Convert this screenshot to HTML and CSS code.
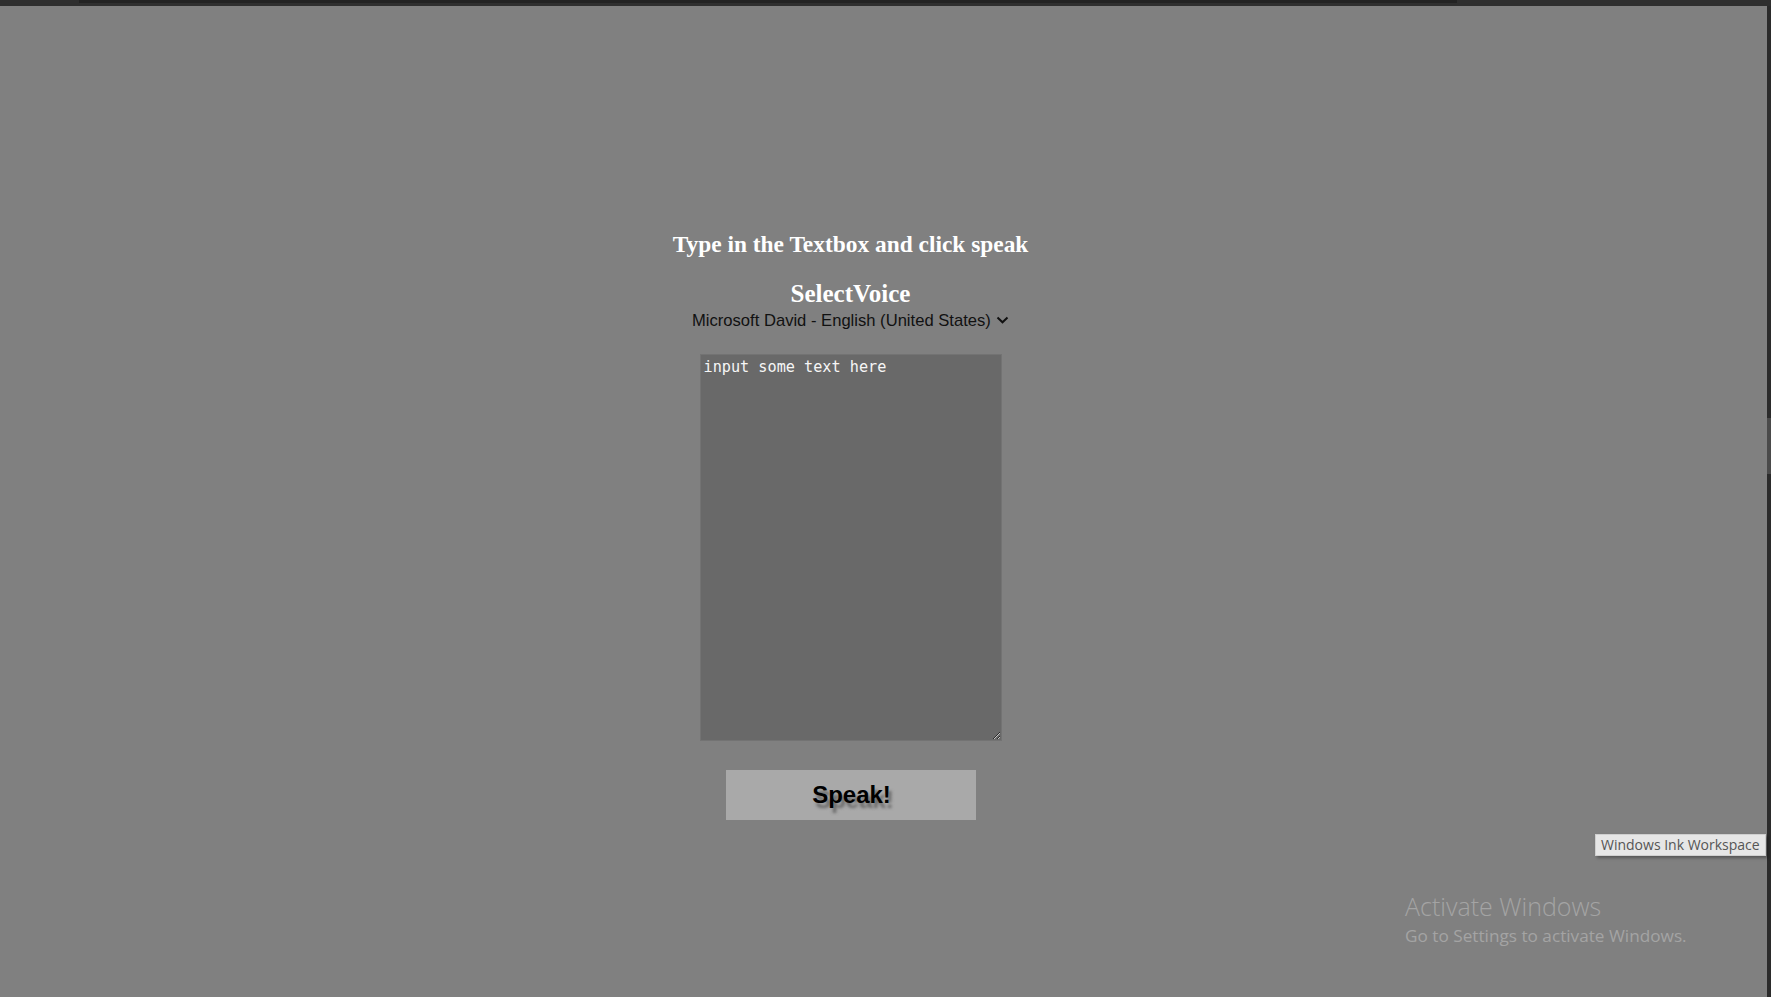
FILE: index.html
```html
<!DOCTYPE html>
<html lang="en">
<head>
<meta charset="utf-8">
<title>Text to Speech</title>
<link rel="stylesheet" href="styles.css">
</head>
<body>
<div class="chrome-top"><div class="chrome-line"></div></div>
<div class="window">
  <main class="page">
    <h2 class="title">Type in the Textbox and click speak</h2>
    <h2 class="voice-label">SelectVoice</h2>
    <div class="select-wrap">
      <select class="voice-select">
        <option>Microsoft David - English (United States)</option>
      </select>
      <svg class="chevron" width="13" height="8" viewBox="0 0 13 8"><path d="M1.5 1.5 L6.5 6.3 L11.5 1.5" fill="none" stroke="#111" stroke-width="2"/></svg>
    </div>
    <textarea class="text-input">input some text here</textarea>
    <button class="speak-btn">Speak!</button>
  </main>
  <div class="scrollbar"><div class="scroll-thumb"></div></div>
  <div class="ink-tooltip">Windows Ink Workspace</div>
  <div class="activate">
    <div class="activate-title">Activate Windows</div>
    <div class="activate-sub">Go to Settings to activate Windows.</div>
  </div>
</div>
</body>
</html>
```
FILE: styles.css
```css
html, body {
  margin: 0;
  padding: 0;
  height: 100%;
  overflow: hidden;
}
body {
  background: #808080;
  font-family: "Liberation Serif", serif;
}
.chrome-top {
  height: 6px;
  background: #2f2f2f;
  position: relative;
}
.chrome-line {
  margin-left: 79px;
  width: 1378px;
  height: 3px;
  background: #232323;
}
.window {
  position: relative;
  display: flex;
  height: 991px;
}
.page {
  width: 1701px;
  display: flex;
  flex-direction: column;
  align-items: center;
  padding-top: 224px;
}
.title {
  margin: 0;
  font-size: 23.4px;
  line-height: 28px;
  font-weight: bold;
  color: #ffffff;
}
.voice-label {
  margin: 22px 0 0;
  font-size: 25px;
  line-height: 28px;
  font-weight: bold;
  color: #ffffff;
}
.select-wrap {
  margin-top: 2px;
  display: flex;
  align-items: center;
  gap: 5px;
  height: 20px;
}
.voice-select {
  appearance: none;
  -webkit-appearance: none;
  border: none;
  background: transparent;
  font-family: "Liberation Sans", Arial, sans-serif;
  font-size: 16.6px;
  color: #111111;
  padding: 0;
  margin: 0;
  height: 20px;
  outline: none;
}
.chevron {
  display: block;
}
.text-input {
  margin-top: 24px;
  width: 302px;
  height: 387px;
  box-sizing: border-box;
  background: #696969;
  border: 1px solid #737373;
  color: #f6f6f6;
  font-family: "DejaVu Sans Mono", "Liberation Mono", monospace;
  font-size: 15.2px;
  line-height: 18px;
  padding: 3px 3px;
  outline: none;
  resize: both;
}
.speak-btn {
  margin-top: 29px;
  width: 250px;
  height: 50px;
  background: #a9a9a9;
  border: none;
  font-family: "Liberation Sans", Arial, sans-serif;
  font-weight: bold;
  font-size: 24px;
  color: #000000;
  text-shadow: 3px 5px 3px rgba(95, 95, 95, 0.85);
  padding: 0 0 0 2px;
}
.scrollbar {
  margin-left: auto;
  width: 4px;
  background: #2b2b2b;
  position: relative;
}
.scroll-thumb {
  margin-top: 412px;
  height: 56px;
  background: #4a4a4a;
}
.ink-tooltip {
  position: absolute;
  left: 1595px;
  top: 828px;
  height: 22px;
  padding: 0 5px;
  box-sizing: border-box;
  background: #e6e6e6;
  border: 1px solid #cfcfcf;
  box-shadow: 2px 2px 3px rgba(0,0,0,0.35);
  font-family: "Open Sans", "Noto Sans", sans-serif;
  font-size: 14px;
  line-height: 20px;
  color: #555555;
  white-space: nowrap;
}
.activate {
  position: absolute;
  left: 1405px;
  top: 884px;
  color: #a4a4a4;
  font-family: "Open Sans", "Noto Sans", sans-serif;
}
.activate-title {
  font-size: 25px;
  line-height: 32px;
  font-weight: 300;
}
.activate-sub {
  margin-top: 2px;
  font-size: 17.2px;
  line-height: 24px;
}
```
